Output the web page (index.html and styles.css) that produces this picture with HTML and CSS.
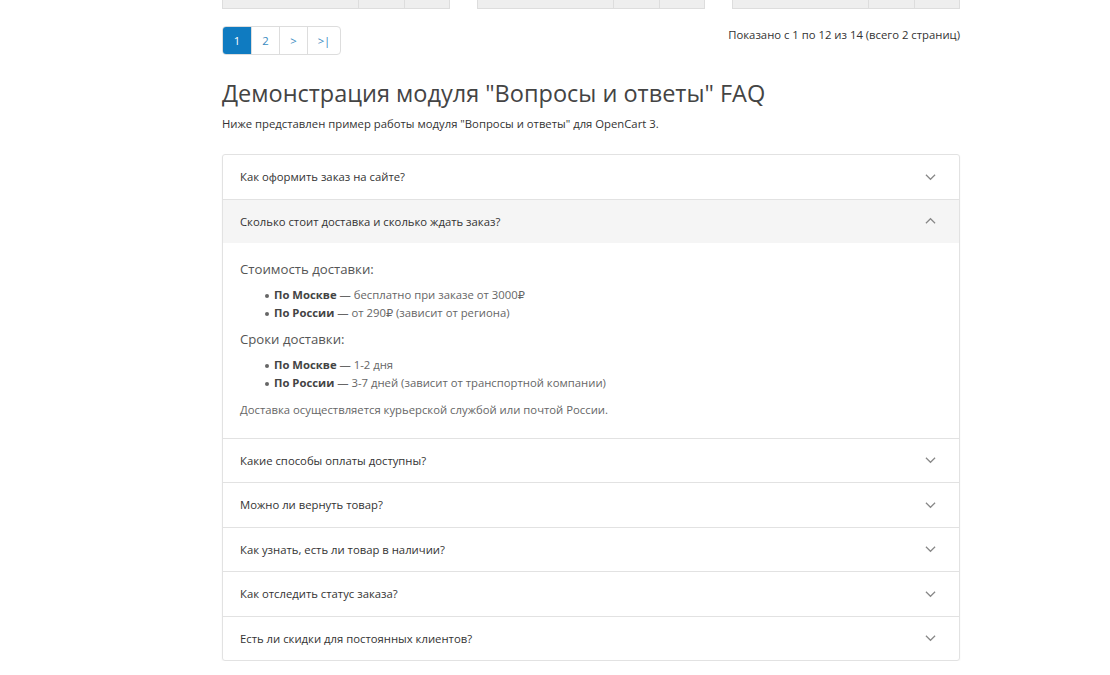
FILE: index.html
```html
<!DOCTYPE html>
<html lang="ru">
<head>
<meta charset="utf-8">
<title>FAQ</title>
<link rel="stylesheet" href="styles.css">
</head>
<body>
<div class="page">
  <div class="cards">
    <div class="card-bottom"><span class="b1"></span><span class="b2"></span><span class="b3"></span></div>
    <div class="card-bottom"><span class="b1"></span><span class="b2"></span><span class="b3"></span></div>
    <div class="card-bottom"><span class="b1"></span><span class="b2"></span><span class="b3"></span></div>
  </div>
  <div class="pager-row">
    <ul class="pagination">
      <li class="active">1</li>
      <li>2</li>
      <li>&gt;</li>
      <li class="last">&gt;|</li>
    </ul>
    <div class="results">Показано с 1 по 12 из 14 (всего 2 страниц)</div>
  </div>
  <h1 class="title">Демонстрация модуля "Вопросы и ответы" FAQ</h1>
  <p class="lead">Ниже представлен пример работы модуля "Вопросы и ответы" для OpenCart 3.</p>

  <div class="accordion">
    <div class="item">
      <div class="head"><span>Как оформить заказ на сайте?</span><svg class="chev" viewBox="0 0 12 8"><path d="M1 1.5l5 5 5-5"/></svg></div>
    </div>
    <div class="item open">
      <div class="head"><span>Сколько стоит доставка и сколько ждать заказ?</span><svg class="chev" viewBox="0 0 12 8"><path d="M1 6.5l5-5 5 5"/></svg></div>
      <div class="body">
        <h4>Стоимость доставки:</h4>
        <ul>
          <li><b>По Москве</b> — бесплатно при заказе от 3000₽</li>
          <li><b>По России</b> — от 290₽ (зависит от региона)</li>
        </ul>
        <h4>Сроки доставки:</h4>
        <ul>
          <li><b>По Москве</b> — 1-2 дня</li>
          <li><b>По России</b> — 3-7 дней (зависит от транспортной компании)</li>
        </ul>
        <p>Доставка осуществляется курьерской службой или почтой России.</p>
      </div>
    </div>
    <div class="item">
      <div class="head"><span>Какие способы оплаты доступны?</span><svg class="chev" viewBox="0 0 12 8"><path d="M1 1.5l5 5 5-5"/></svg></div>
    </div>
    <div class="item">
      <div class="head"><span>Можно ли вернуть товар?</span><svg class="chev" viewBox="0 0 12 8"><path d="M1 1.5l5 5 5-5"/></svg></div>
    </div>
    <div class="item">
      <div class="head"><span>Как узнать, есть ли товар в наличии?</span><svg class="chev" viewBox="0 0 12 8"><path d="M1 1.5l5 5 5-5"/></svg></div>
    </div>
    <div class="item">
      <div class="head"><span>Как отследить статус заказа?</span><svg class="chev" viewBox="0 0 12 8"><path d="M1 1.5l5 5 5-5"/></svg></div>
    </div>
    <div class="item">
      <div class="head"><span>Есть ли скидки для постоянных клиентов?</span><svg class="chev" viewBox="0 0 12 8"><path d="M1 1.5l5 5 5-5"/></svg></div>
    </div>
  </div>
</div>
</body>
</html>
```
FILE: styles.css
```css
* { box-sizing: border-box; }
html, body { margin: 0; padding: 0; background: #fff; }
body {
  font-family: "Open Sans", "DejaVu Sans", sans-serif;
  font-size: 11.3px;
  color: #666;
}
.page {
  width: 738px;
  margin-left: 222px;
}
.cards {
  display: flex;
  gap: 27px;
  height: 9px;
}
.card-bottom {
  width: 228px;
  display: flex;
  border: 1px solid #ddd;
  border-top: none;
  height: 9px;
}
.card-bottom span {
  background: #eee;
  height: 8px;
}
.card-bottom .b1 { width: 136px; border-right: 1px solid #ddd; }
.card-bottom .b2 { width: 46px; border-right: 1px solid #ddd; }
.card-bottom .b3 { flex: 1; }

.pager-row {
  display: flex;
  justify-content: space-between;
  align-items: flex-start;
  margin-top: 17px;
}
.pagination {
  display: flex;
  list-style: none;
  margin: 0;
  padding: 0;
  border: 1px solid #ddd;
  border-radius: 4px;
  overflow: hidden;
  height: 29px;
}
.pagination li {
  width: 28px;
  height: 27px;
  line-height: 27px;
  text-align: center;
  color: #3a8bbf;
  border-left: 1px solid #ddd;
  font-size: 11.3px;
}
.pagination li:first-child { border-left: none; }
.pagination li.active {
  background: #0f7bc1;
  color: #fff;
  width: 28px;
}
.pagination li.last { width: 33px; }
.results {
  color: #333;
  font-size: 11.3px;
  line-height: 18px;
  margin-top: 0;
}
.title {
  font-weight: 400;
  font-size: 23.5px;
  color: #444;
  margin: 21px 0 0;
  line-height: 34px;
}
.lead {
  margin: 5px 0 0;
  color: #333;
  font-size: 11.3px;
  line-height: 18px;
}
.accordion {
  margin-top: 21px;
  border: 1px solid #e2e2e2;
  border-radius: 3px;
  box-shadow: 0 1px 2px rgba(0,0,0,0.06);
}
.item { border-top: 1px solid #e2e2e2; }
.item:first-child { border-top: none; }
.head {
  height: 43.5px;
  display: flex;
  align-items: center;
  justify-content: space-between;
  padding: 0 23px 0 17px;
  color: #333;
  font-size: 11.3px;
}
.open .head { background: #f5f5f5; }
.chev {
  width: 11px;
  height: 8px;
  fill: none;
  stroke: #888;
  stroke-width: 1.3;
}
.body {
  padding: 16px 17px 19px;
  color: #666;
}
.body h4 {
  margin: 0;
  font-weight: 400;
  font-size: 13.2px;
  color: #555;
  line-height: 20px;
}
.body ul {
  margin: 6.5px 0 6.5px;
  padding-left: 34px;
  list-style: none;
}
.body li {
  line-height: 18.5px;
  position: relative;
}
.body li::before {
  content: "";
  position: absolute;
  left: -9px;
  top: 8px;
  width: 4px;
  height: 4px;
  border-radius: 50%;
  background: #666;
}
.body li b { color: #444; font-weight: 700; }
.body p {
  margin: 8px 0 0;
  line-height: 18px;
}
```
